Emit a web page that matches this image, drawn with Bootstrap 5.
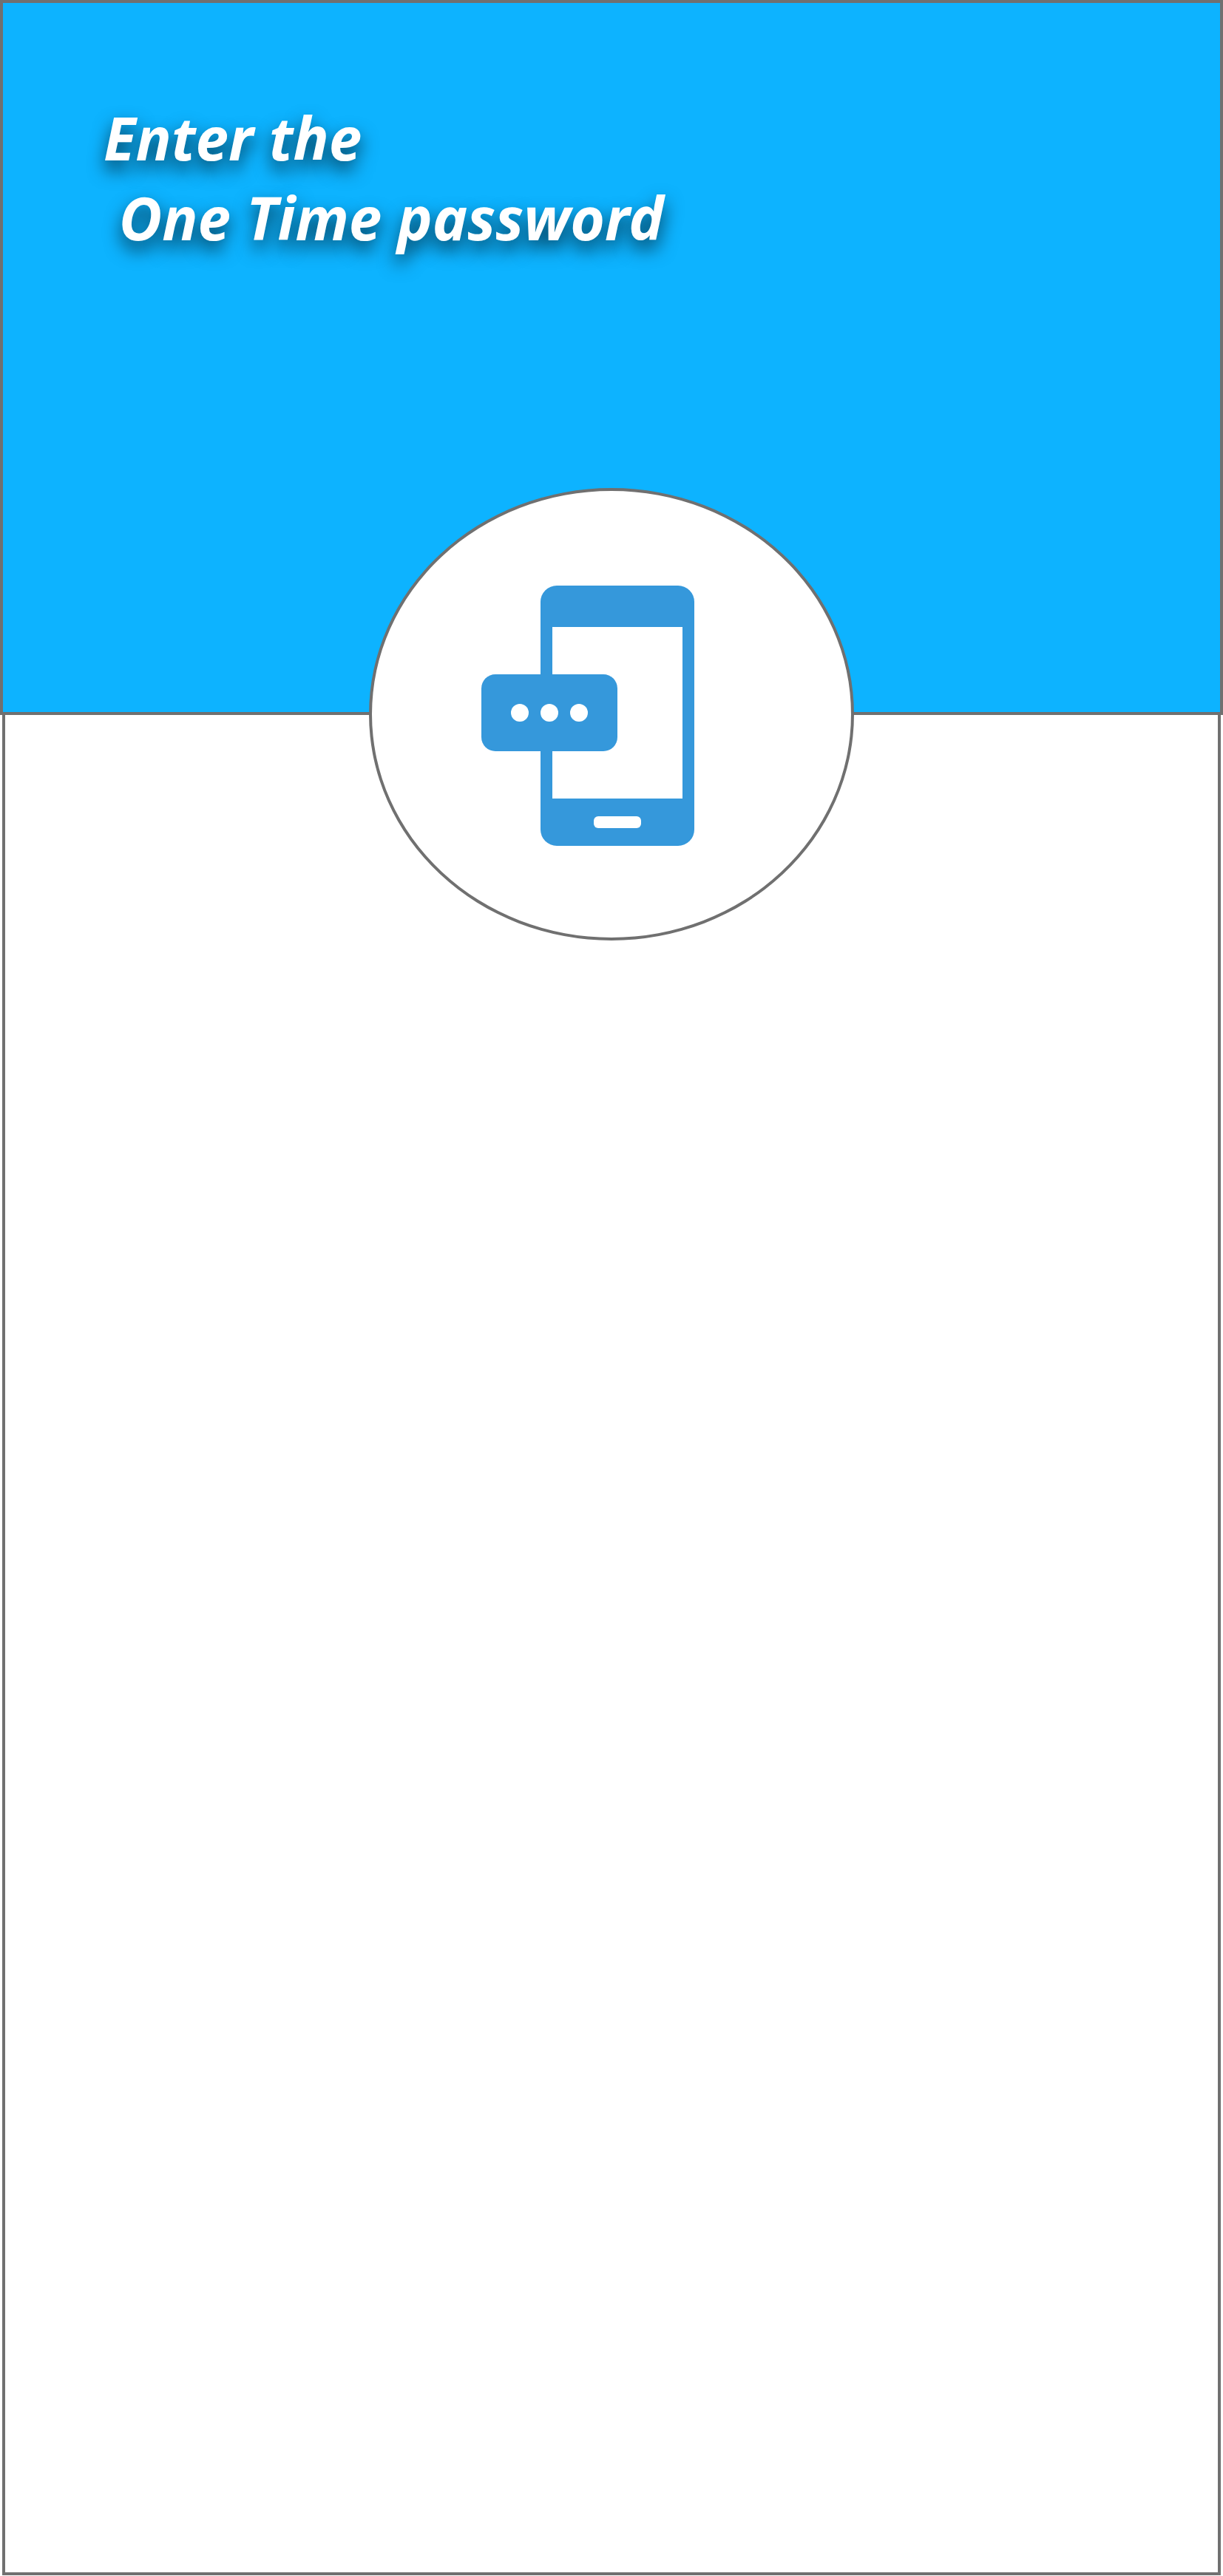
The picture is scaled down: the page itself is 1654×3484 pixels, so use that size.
<!DOCTYPE html>
<html lang="en">
<head>
<meta charset="utf-8">
<meta name="viewport" content="width=device-width, initial-scale=1">
<title>One Time password</title>
<link href="https://cdn.jsdelivr.net/npm/bootstrap@5.3.0/dist/css/bootstrap.min.css" rel="stylesheet">
<style>
  .otp-hero { min-height: 967px; padding: 128px 136px; background: #0db3ff; border: 4px solid #707070; }
  .otp-title { font-family: "Noto Sans", "Open Sans", sans-serif; font-size: 80px; line-height: 108px; text-shadow: 0 12px 24px rgba(0, 0, 0, .7); }
  .otp-panel { margin: 0 3px 1px; border: 4px solid #707070; border-top: 0; }
  .otp-disc { width: 656px; max-width: 90%; height: 612px; margin-top: -307px; padding-top: 4px; border: 4px solid #707070; border-radius: 50%; }
</style>
</head>
<body class="bg-white">
<div class="min-vh-100 d-flex flex-column">
  <header class="otp-hero">
    <h1 class="otp-title text-white fw-bold fst-italic mb-0">Enter the<br>&nbsp;One Time password</h1>
  </header>
  <main class="otp-panel flex-grow-1 bg-white">
    <div class="otp-disc bg-white mx-auto d-flex align-items-center justify-content-center">
      <svg width="352" height="352" viewBox="0 0 352 352" role="img" aria-label="Text message on a phone">
        <rect x="80" width="208" height="352" rx="22" fill="#3598db"/>
        <rect x="96" y="56" width="176" height="232" fill="#fff"/>
        <rect x="152" y="312" width="64" height="16" rx="6" fill="#fff"/>
        <rect y="120" width="184" height="104" rx="19" fill="#3598db"/>
        <g fill="#fff"><circle cx="52" cy="172" r="12"/><circle cx="92" cy="172" r="12"/><circle cx="132" cy="172" r="12"/></g>
      </svg>
    </div>
  </main>
</div>
<script src="https://cdn.jsdelivr.net/npm/bootstrap@5.3.0/dist/js/bootstrap.bundle.min.js"></script>
</body>
</html>
